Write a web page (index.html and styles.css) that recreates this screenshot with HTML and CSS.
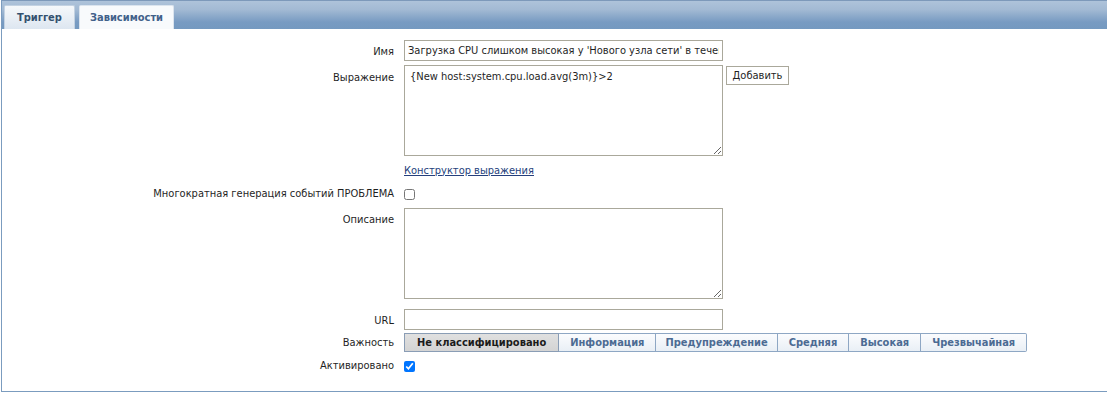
FILE: index.html
```html
<!DOCTYPE html>
<html lang="ru">
<head>
    <meta charset="UTF-8">
    <title>Триггер</title>
    <link rel="stylesheet" href="styles.css">
</head>
<body>
    <div class="panel">
        <div class="tabs-bar">
            <div class="tab tab-active">Триггер</div>
            <div class="tab">Зависимости</div>
        </div>
        <form class="form-grid">
            <label class="form-label">Имя</label>
            <div class="form-field">
                <input class="text-input" type="text" value="Загрузка CPU слишком высокая у 'Нового узла сети' в течение 3 минут">
            </div>

            <label class="form-label label-expr">Выражение</label>
            <div class="form-field field-row">
                <textarea class="text-area">{New host:system.cpu.load.avg(3m)}>2</textarea>
                <button type="button" class="plain-button">Добавить</button>
            </div>

            <div></div>
            <div class="form-field field-center">
                <a href="#" class="link">Конструктор выражения</a>
            </div>

            <label class="form-label label-check">Многократная генерация событий ПРОБЛЕМА</label>
            <div class="form-field field-center">
                <input class="check" type="checkbox">
            </div>

            <label class="form-label">Описание</label>
            <div class="form-field">
                <textarea class="text-area area-desc"></textarea>
            </div>

            <label class="form-label">URL</label>
            <div class="form-field">
                <input class="text-input" type="text">
            </div>

            <label class="form-label label-sev">Важность</label>
            <div class="form-field">
                <div class="severity">
                    <button type="button" class="sev-button sev-selected">Не классифицировано</button>
                    <button type="button" class="sev-button">Информация</button>
                    <button type="button" class="sev-button sev-narrow">Предупреждение</button>
                    <button type="button" class="sev-button">Средняя</button>
                    <button type="button" class="sev-button">Высокая</button>
                    <button type="button" class="sev-button">Чрезвычайная</button>
                </div>
            </div>

            <label class="form-label label-check">Активировано</label>
            <div class="form-field field-center">
                <input class="check" type="checkbox" checked>
            </div>
        </form>
    </div>
</body>
</html>
```

FILE: styles.css
```css
* {
    box-sizing: border-box;
}

body {
    margin: 0;
    background: #ffffff;
    font-family: "DejaVu Sans Condensed", "DejaVu Sans", sans-serif;
    font-size: 11px;
    color: #1f1f1f;
}

.panel {
    margin-left: 1px;
    height: 392px;
    border-left: 1px solid #7b9cbf;
    border-bottom: 1px solid #7b9cbf;
    box-shadow: 0 2px 0 #c9d6e4;
}

.tabs-bar {
    height: 29px;
    border-top: 1px solid #7d99ba;
    background: linear-gradient(#aec3da, #a3bad4 30%, #789bc2 75%, #7499c0);
    display: flex;
    align-items: flex-end;
    gap: 4px;
    padding-left: 2px;
}

.tab {
    height: 24px;
    padding: 0 10px;
    display: flex;
    align-items: center;
    font-weight: bold;
    color: #41618a;
    background: #f8fafc;
    border: 1px solid #dbe4ee;
    border-bottom: none;
    border-radius: 2px 2px 0 0;
}

.tab-active {
    padding: 0 12px;
    background: linear-gradient(#f5f8fb, #dde6f0);
    border-color: #c3d2e2;
    color: #33506f;
}

.form-grid {
    display: grid;
    grid-template-columns: 392px 1fr;
    column-gap: 10px;
    row-gap: 4px;
    padding-top: 11px;
}

.form-label {
    text-align: right;
    padding-top: 5px;
    line-height: 13px;
}

.label-expr {
    padding-top: 6px;
}

.label-check {
    padding-top: 0;
    line-height: 20px;
}

.label-sev {
    padding-top: 2px;
}

.form-field {
    display: flex;
    align-items: flex-start;
}

.field-center {
    height: 20px;
    align-items: center;
}

.field-row {
    gap: 3px;
}

.text-input {
    width: 319px;
    height: 21px;
    border: 1px solid #aaa89b;
    padding: 0 3px;
    font: inherit;
    color: #1f1f1f;
}

.text-area {
    width: 319px;
    height: 91px;
    border: 1px solid #aaa89b;
    padding: 4px 5px 2px;
    font: inherit;
    color: #1f1f1f;
}

.area-desc {
    margin-bottom: 6px;
}

.plain-button {
    margin-top: 1px;
    height: 19px;
    width: 63px;
    padding: 0;
    border: 1px solid #aaa89b;
    background: #ffffff;
    font: inherit;
    color: #1f1f1f;
}

.link {
    color: #253f7c;
}

.check {
    margin: 0;
    width: 11px;
    height: 11px;
}

.severity {
    display: flex;
    margin-top: -1px;
}

.sev-button {
    height: 19px;
    padding: 0 11px;
    border: 1px solid #8ea7c4;
    border-left-width: 0;
    background: linear-gradient(#fbfcfe, #e9eff5);
    font: inherit;
    font-weight: bold;
    color: #4c6b93;
}

.sev-button:first-child {
    border-left-width: 1px;
}

.sev-narrow {
    padding: 0 9px;
}

.sev-selected {
    background: linear-gradient(#e0e0e0, #d4d4d4);
    color: #1b1b1b;
    border-color: #8a9db5;
    padding: 0 12px;
}

.sev-button:last-child {
    border-radius: 0 2px 2px 0;
}
```
